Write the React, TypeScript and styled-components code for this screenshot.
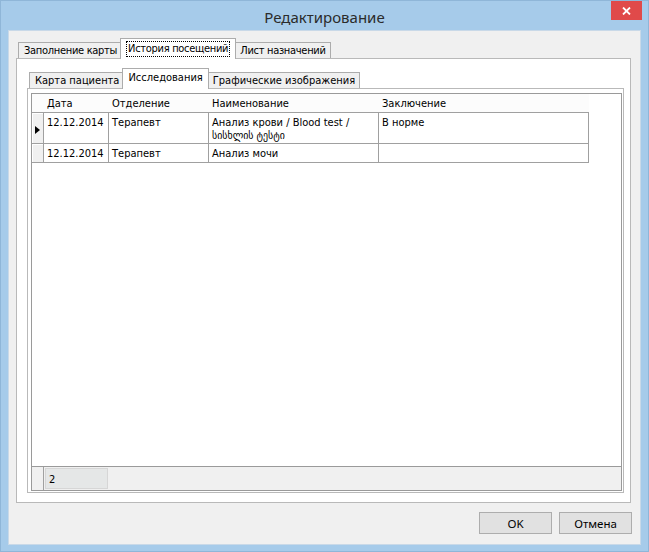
import styled, { createGlobalStyle } from "styled-components"

const GlobalStyle = createGlobalStyle`
  html, body {
    margin: 0;
    padding: 0;
    background: #a6cbea;
  }
  body {
    font-family: "DejaVu Sans Condensed", "Liberation Sans", "DejaVu Sans", sans-serif;
    font-size: 11px;
    color: #000;
  }
  * {
    box-sizing: border-box;
  }
`

interface Column {
  title: string
  width: number
}

interface Row {
  current?: boolean
  height: number
  cells: string[][]
}

const columns: Column[] = [
  { title: "Дата", width: 65 },
  { title: "Отделение", width: 100 },
  { title: "Наименование", width: 170 },
  { title: "Заключение", width: 210 },
]

const rows: Row[] = [
  {
    current: true,
    height: 31,
    cells: [
      ["12.12.2014"],
      ["Терапевт"],
      ["Анализ крови / Blood test /", "სისხლის ტესტი"],
      ["В норме"],
    ],
  },
  {
    height: 19,
    cells: [["12.12.2014"], ["Терапевт"], ["Анализ мочи"], [""]],
  },
]

const template = `12px ${columns.map((c) => `${c.width}px`).join(" ")}`

const App = () => {
  return (
    <>
      <GlobalStyle />
      <Window>
        <TitleBar>
          <span />
          <Title>Редактирование</Title>
          <CloseButton aria-label="Закрыть">
            <svg width="9" height="8" viewBox="0 0 9 8">
              <path d="M1 0.5 L8 7.5 M8 0.5 L1 7.5" stroke="#fff" strokeWidth="1.8" />
            </svg>
          </CloseButton>
        </TitleBar>

        <Client>
          <TabControl>
            <TabStrip $tight>
              <Tab>Заполнение карты</Tab>
              <Tab $active>
                <Focus>История посещений</Focus>
              </Tab>
              <Tab>Лист назначений</Tab>
            </TabStrip>
            <TabPage $padding="10px 6px 9px 10px">
              <TabControl>
                <TabStrip>
                  <Tab>Карта пациента</Tab>
                  <Tab $active>Исследования</Tab>
                  <Tab>Графические изображения</Tab>
                </TabStrip>
                <TabPage $padding="4px 1px 1px 3px">
                  <Grid>
                    <HeaderRow>
                      <RowHeaderCell $header />
                      {columns.map((c) => (
                        <HeaderCell key={c.title}>{c.title}</HeaderCell>
                      ))}
                    </HeaderRow>
                    {rows.map((r, i) => (
                      <DataRow key={i} $height={r.height}>
                        <RowHeaderCell>{r.current && <CurrentMark />}</RowHeaderCell>
                        {r.cells.map((lines, j) => (
                          <Cell key={j}>
                            {lines.map((l, k) => (
                              <div key={k}>{l}</div>
                            ))}
                          </Cell>
                        ))}
                      </DataRow>
                    ))}
                    <GridFill />
                    <Footer>
                      <FooterRowHeader />
                      <CountBox>2</CountBox>
                    </Footer>
                  </Grid>
                </TabPage>
              </TabControl>
            </TabPage>
          </TabControl>

          <ButtonRow>
            <Button>OK</Button>
            <Button>Отмена</Button>
          </ButtonRow>
        </Client>
      </Window>
    </>
  )
}

export default App

const Window = styled.div`
  width: 649px;
  height: 552px;
  display: flex;
  flex-direction: column;
  background: #a6cbea;
  border: 1px solid #8fb6d8;
`

const TitleBar = styled.div`
  height: 29px;
  flex-shrink: 0;
  display: grid;
  grid-template-columns: 1fr auto 1fr;
  align-items: start;
`

const Title = styled.div`
  font-family: "Noto Sans", "Open Sans", sans-serif;
  font-size: 15px;
  color: #2b2b2b;
  padding-top: 6px;
  line-height: 20px;
`

const CloseButton = styled.button`
  justify-self: end;
  width: 31px;
  height: 19px;
  margin-right: 6px;
  border: none;
  padding: 0;
  background: #e04a4a;
  display: flex;
  align-items: center;
  justify-content: center;
`

const Client = styled.div`
  flex: 1;
  margin: 0 7px 6px 7px;
  background: #f0f0f0;
  border: 1px solid #c9d9e8;
  display: flex;
  flex-direction: column;
  padding: 8px 9px 10px 7px;
`

const TabControl = styled.div`
  flex: 1;
  display: flex;
  flex-direction: column;
  min-height: 0;
`

const TabStrip = styled.div<{ $tight?: boolean }>`
  height: 19px;
  display: flex;
  align-items: flex-end;
  padding-left: 2px;
  flex-shrink: 0;
  letter-spacing: ${(p) => (p.$tight ? "-0.3px" : "0")};
`

const Tab = styled.div<{ $active?: boolean }>`
  position: relative;
  height: ${(p) => (p.$active ? "21px" : "16px")};
  margin: ${(p) => (p.$active ? "0 -2px -1px -2px" : "0")};
  z-index: ${(p) => (p.$active ? 1 : 0)};
  padding: ${(p) => (p.$active ? "0 5px" : "0 4px 0 5px")};
  background: ${(p) => (p.$active ? "#fff" : "#f0f0f0")};
  border: 1px solid #acacac;
  border-bottom: none;
  display: flex;
  align-items: ${(p) => (p.$active ? "flex-start" : "center")};
  padding-top: ${(p) => (p.$active ? "2px" : "0")};
  white-space: nowrap;
  line-height: 14px;
`

const Focus = styled.span`
  border: 1px dotted #000;
  padding: 0 1px;
  line-height: 14px;
`

const TabPage = styled.div<{ $padding: string }>`
  flex: 1;
  display: flex;
  flex-direction: column;
  min-height: 0;
  background: #fff;
  border: 1px solid #b9b9b9;
  padding: ${(p) => p.$padding};
`

const Grid = styled.div`
  flex: 1;
  display: flex;
  flex-direction: column;
  background: #fff;
  border: 1px solid #9a9a9a;
  min-height: 0;
`

const HeaderRow = styled.div`
  display: grid;
  grid-template-columns: ${template};
  height: 19px;
  width: 557px;
  border-bottom: 1px solid #a0a0a0;
  background: #fcfcfc;
`

const HeaderCell = styled.div`
  padding: 3px 3px 0;
  line-height: 13px;
  white-space: nowrap;
`

const DataRow = styled.div<{ $height: number }>`
  display: grid;
  grid-template-columns: ${template};
  width: 557px;
  height: ${(p) => p.$height}px;
`

const RowHeaderCell = styled.div<{ $header?: boolean }>`
  background: ${(p) => (p.$header ? "#fcfcfc" : "#f0f0f0")};
  border-right: ${(p) => (p.$header ? "none" : "1px solid #a0a0a0")};
  border-bottom: ${(p) => (p.$header ? "none" : "1px solid #a0a0a0")};
  box-shadow: ${(p) => (p.$header ? "none" : "inset 1px 1px 0 #fff")};
  display: flex;
  align-items: center;
  padding-left: 3px;
`

const CurrentMark = styled.span`
  width: 0;
  height: 0;
  border-left: 5px solid #000;
  border-top: 4px solid transparent;
  border-bottom: 4px solid transparent;
  margin-top: 4px;
`

const Cell = styled.div`
  padding: 3px 3px 0;
  line-height: 13px;
  border-right: 1px solid #a0a0a0;
  border-bottom: 1px solid #a0a0a0;
  white-space: nowrap;
  overflow: hidden;
`

const GridFill = styled.div`
  flex: 1;
`

const Footer = styled.div`
  height: 24px;
  display: flex;
  background: #f0f0f0;
  border-top: 1px solid #9a9a9a;
`

const FooterRowHeader = styled.div`
  width: 12px;
  border-right: 1px solid #a0a0a0;
`

const CountBox = styled.div`
  width: 63px;
  margin: 1px 0 1px 1px;
  background: #e5e7e7;
  border: 1px solid #d6d6d6;
  padding: 4px 3px 0;
  line-height: 13px;
`

const ButtonRow = styled.div`
  display: flex;
  justify-content: flex-end;
  gap: 7px;
  margin-top: 9px;
  margin-right: -1px;
`

const Button = styled.button`
  width: 73px;
  height: 22px;
  padding: 0;
  font-family: "Noto Sans", "Liberation Sans", sans-serif;
  font-size: 11.5px;
  color: #000;
  background: #e1e1e1;
  border: 1px solid #adadad;
`
